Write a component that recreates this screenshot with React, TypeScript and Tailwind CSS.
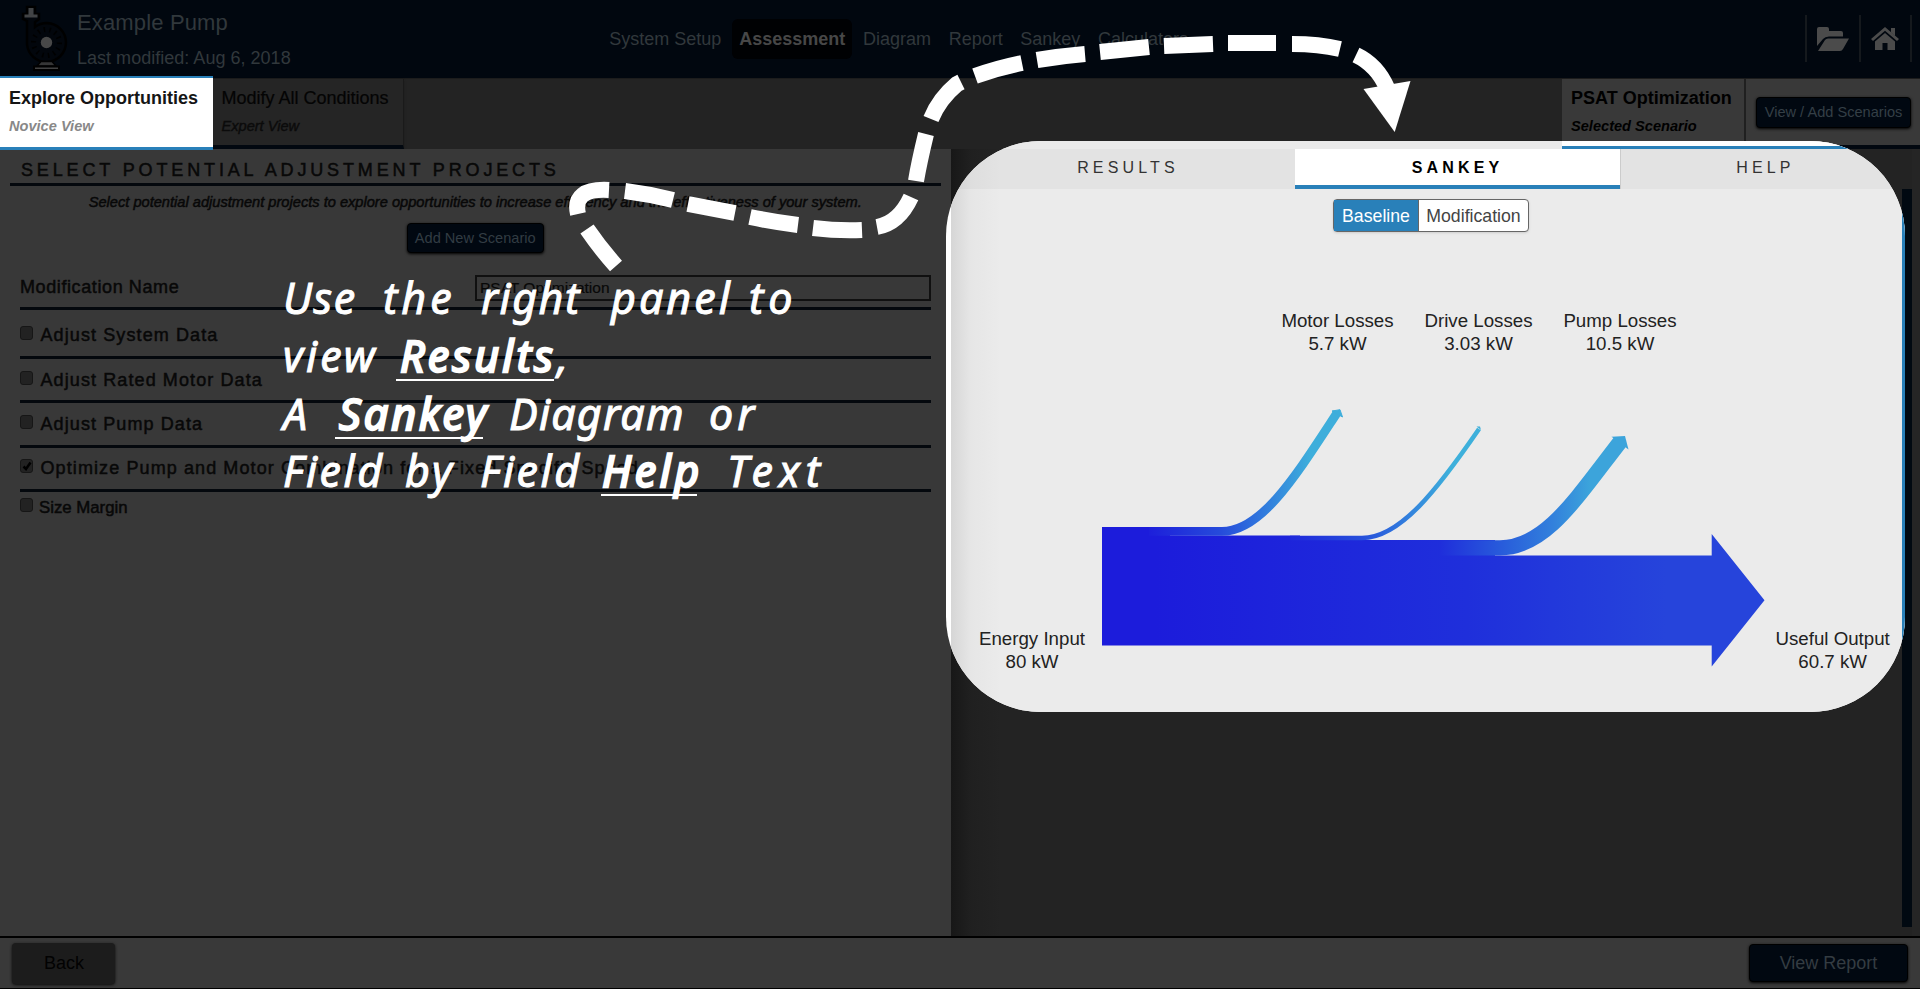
const NAV = ["System Setup", "Assessment", "Diagram", "Report", "Sankey", "Calculators"];

const PROJECTS = [
  { label: "Adjust System Data", checked: false, row: "h-[49px] pt-[16px]" },
  { label: "Adjust Rated Motor Data", checked: false, row: "h-[44px] pt-[12px]" },
  { label: "Adjust Pump Data", checked: false, row: "h-[45px] pt-[12px]" },
  { label: "Optimize Pump and Motor Combination for a Fixed Specific Speed", checked: true, row: "h-[44px] pt-[11px]" },
];

function PumpLogo() {
  return (
    <svg width="54" height="76" viewBox="0 0 54 76" className="ml-[18px] shrink-0">
      <path d="M5 19V14H9V7H17V14H21V19L17 22V27Q22 23 29 23A19.500 19.500 0 1 1 9 44V21Z" fill="#02060c" stroke="#000" strokeWidth="2.500" />
      <path d="M6.500 14.500H10.500V8H15.500V14.500H19.500V17.500H6.500Z" fill="#414345" />
      <circle cx="28.500" cy="42.500" r="13" fill="none" stroke="#000" strokeWidth="5" strokeDasharray="1.500 4.300" />
      <circle cx="28.500" cy="42.500" r="5.700" fill="#484848" />
      <path d="M23 61.500H34L38 66H19Z" fill="#363636" stroke="#000" strokeWidth="1.500" />
      <path d="M16 66.500H41V70H16Z" fill="#414141" stroke="#000" strokeWidth="2" />
    </svg>
  );
}

function Checkbox({ checked }: { checked: boolean }) {
  return (
    <span className="flex h-[14px] w-[13px] shrink-0 items-center justify-center rounded-[3px] border border-[#161616] bg-[#222]">
      {checked && (
        <svg width="10" height="10" viewBox="0 0 10 10">
          <path d="M1.500 5.500L4 8L8.500 1.500" fill="none" stroke="#000" strokeWidth="2.500" />
        </svg>
      )}
    </span>
  );
}

function Header() {
  return (
    <header className="flex h-[78px] shrink-0 text-[#31383c]">
      <div className="flex w-[602.500px]">
        <PumpLogo />
        <div className="ml-[5px] pt-[9px]">
          <div className="text-[22px] leading-[27px] tracking-[0.150px]">Example Pump</div>
          <div className="mt-[10px] text-[18px] leading-6 tracking-[0.020px]">Last modified: Aug 6, 2018</div>
        </div>
      </div>
      <nav className="mt-[19px] flex h-10 gap-1 text-[18px] leading-10">
        {NAV.map((n) => (
          <span
            key={n}
            className={n === "Assessment" ? "rounded-md bg-[#000103] px-[7px] font-bold text-[#474747]" : "px-[6.800px]"}
          >
            {n}
          </span>
        ))}
      </nav>
      <div className="ml-auto mr-[8px] mt-[15px] flex h-[47px] items-center border-r-2 border-[#15191d]">
        <div className="flex h-full w-[54px] items-center justify-center border-l-2 border-[#15191d]">
          <svg width="34" height="26" viewBox="0 0 34 26" fill="#4b4b4b">
            <path d="M1 20V3Q1 1 3 1H11Q13 1 13 3V5H25Q27 5 27 7V10.500H13Q9 10.500 7 13Z" />
            <path d="M2 25L9 14Q10 12.500 12 12.500H33L27 23Q26 25 24 25Z" />
          </svg>
        </div>
        <div className="flex h-full w-[51px] items-center justify-center border-l-2 border-[#15191d] pr-px">
          <svg width="30" height="26" viewBox="0 0 30 26" fill="#4b4b4b">
            <path d="M15 1L29 13L27 15L15 4.700L3 15L1 13Z" />
            <path d="M21 2H25V10L21 6.500Z" />
            <path d="M15 7L25 15.500V24H17.500V17H12.500V24H5V15.500Z" />
          </svg>
        </div>
      </div>
    </header>
  );
}

function ViewTabs() {
  return (
    <div className="flex h-[71px] shrink-0 border-t border-[#1c1c1c] bg-[#232323] text-black">
      <div className="z-10 -mt-[3px] h-[74px] w-[212.500px] border-b-[3px] border-t-2 border-[#2980b9] bg-white pl-[9px] pt-[6px]">
        <div className="text-[18px] font-bold leading-7 text-[#151515]">Explore Opportunities</div>
        <div className="text-[14.600px] font-bold italic leading-7 text-[#888]">Novice View</div>
      </div>
      <div className="h-[70px] w-[191px] border-b-4 border-r border-b-[#020810] border-r-[#1a1a1a] bg-[#252525] pl-[9px] pt-[5px] shadow">
        <div className="text-[18px] leading-7 text-[#040404] [-webkit-text-stroke:0.2px_#040404]">Modify All Conditions</div>
        <div className="text-[14.600px] italic leading-7 text-[#0b0b0b] [-webkit-text-stroke:0.4px_#0b0b0b]">Expert View</div>
      </div>
      <div className="ml-auto flex h-[70px] w-[358px] border-b-4 border-[#020810] bg-[#393939]">
        <div className="w-[184px] border-r-2 border-[#202020] pl-[9px] pt-[5px]">
          <div className="text-[18px] font-bold leading-7">PSAT Optimization</div>
          <div className="text-[14.600px] font-bold italic leading-7">Selected Scenario</div>
        </div>
        <div className="ml-[10px] mt-[18px] flex h-[31px] w-[155px] items-center justify-center rounded-sm border border-black bg-[#010811] text-[14.600px] text-[#343f46] shadow-[0_1px_3px_#000]">
          View / Add Scenarios
        </div>
      </div>
    </div>
  );
}

function ProjectsPanel() {
  return (
    <section className="h-full w-[950.500px] bg-[#383838] pt-1 text-[#080808] [-webkit-text-stroke:0.5px_#080808]">
      <h2 className="ml-[10px] h-[33px] w-[931px] border-b-[3px] border-[#04080d] pl-[11px] text-[18px] leading-[34px] tracking-[3.860px]">
        SELECT POTENTIAL ADJUSTMENT PROJECTS
      </h2>
      <p className="mt-1 whitespace-nowrap text-center text-[14.630px] italic leading-6">
        Select potential adjustment projects to explore opportunities to increase efficiency and the effectiveness of your
        system.
      </p>
      <div className="mx-auto mt-[9px] flex h-[30px] w-[137px] items-center justify-center rounded-sm border border-black bg-[#010811] pt-px text-[14.600px] text-[#323c43] shadow-[0_1px_3px_#000] [-webkit-text-stroke:0]">
        Add New Scenario
      </div>
      <div className="ml-5 mt-[21px] flex h-[36px] w-[911px] border-b-[3px] border-[#04080d]">
        <span className="w-[455px] text-[18px] leading-[27px] tracking-[0.600px]">Modification Name</span>
        <span className="mt-px h-[26px] w-[456px] border-2 border-[#101010] pl-[3px] text-[15.500px] leading-[22px] [-webkit-text-stroke:0.2px_#080808]">
          PSAT Optimization
        </span>
      </div>
      {PROJECTS.map((p) => (
        <div key={p.label} className={"ml-5 flex w-[911px] items-start border-b-[3px] border-[#04080d] " + p.row}>
          <Checkbox checked={p.checked} />
          <span className="-mt-[4px] ml-[7.500px] text-[18px] leading-[27px] tracking-[1.100px]">{p.label}</span>
        </div>
      ))}
      <div className="ml-5 flex items-start pt-[6px]">
        <Checkbox checked={false} />
        <span className="-mt-[4px] ml-[6px] text-[16.800px] leading-[27px]">Size Margin</span>
      </div>
    </section>
  );
}

function Sankey() {
  return (
    <svg width="700" height="280" viewBox="1080 400 700 280" className="ml-[129px] shrink-0">
      <defs>
        <linearGradient id="main" gradientUnits="userSpaceOnUse" x1="1102" x2="1765" y1="0" y2="0">
          <stop offset="0.080" stopColor="#1c1cdb" />
          <stop offset="0.550" stopColor="#1f2fdb" />
          <stop offset="0.850" stopColor="#2644db" />
        </linearGradient>
        <linearGradient id="motor" gradientUnits="userSpaceOnUse" x1="1149" x2="1310" y1="0" y2="0">
          <stop offset="0" stopColor="#1d1fdb" />
          <stop offset="0.450" stopColor="#264cdb" />
          <stop offset="0.700" stopColor="#3078dd" />
          <stop offset="1" stopColor="#3eaedb" />
        </linearGradient>
        <linearGradient id="drive" gradientUnits="userSpaceOnUse" x1="1290" x2="1450" y1="0" y2="0">
          <stop offset="0" stopColor="#1f29db" />
          <stop offset="0.450" stopColor="#264fdb" />
          <stop offset="0.700" stopColor="#3079dd" />
          <stop offset="1" stopColor="#3eb0db" />
        </linearGradient>
        <linearGradient id="pump" gradientUnits="userSpaceOnUse" x1="1440" x2="1590" y1="0" y2="0">
          <stop offset="0" stopColor="#1f2edb" />
          <stop offset="0.450" stopColor="#2960db" />
          <stop offset="0.750" stopColor="#3280dc" />
          <stop offset="1" stopColor="#3ca4db" />
        </linearGradient>
      </defs>
      <path
        d="M1102 527H1170V535.500H1300V540H1495V555.500H1711.700V534L1764.500 600.300L1711.700 666.500V645.500H1102Z"
        fill="url(#main)"
      />
      <path d="M1149 531.400H1222C1262 531.400 1297 474 1337 413" fill="none" stroke="url(#motor)" strokeWidth="8.800" />
      <path d="M1332 411L1340 409.700L1342.500 417Z" fill="#3eaedb" stroke="#3eaedb" />
      <path d="M1290 538H1362C1400 538 1437 490 1479 429" fill="none" stroke="url(#drive)" strokeWidth="4.600" />
      <path d="M1476.500 426.500H1480L1481 430Z" fill="#3eb0db" />
      <path d="M1440 547.800H1500C1545 547.800 1575 500 1620 442" fill="none" stroke="url(#pump)" strokeWidth="15.200" />
      <path d="M1611.500 436.700L1625 436L1628.500 449.500Z" fill="#3ca4db" />
    </svg>
  );
}

function Spotlight() {
  return (
    <div className="absolute left-[946px] top-[140.500px] flex h-[571.500px] w-[959px] flex-col overflow-hidden rounded-[95px] bg-white text-[#222]">
      <div className="flex h-[8.500px] shrink-0 bg-[#eaeaea]">
        <div className="ml-[616px] flex-1 border-b-[3px] border-[#2980b9] bg-white" />
      </div>
      <div className="ml-[5px] flex flex-1 flex-col bg-[linear-gradient(to_right,#d6d6d6_0,#e6e6e6_20px,#ebebeb_50px)]">
        <div className="flex h-10 shrink-0 bg-black/3 text-[16px] leading-[37px] tracking-[4.150px] text-[#333]">
          <div className="w-[344px] shrink-0 pl-[10px] text-center">RESULTS</div>
          <div className="w-[325px] shrink-0 border-b-4 border-[#2980b9] bg-white text-center font-bold text-black">
            SANKEY
          </div>
          <div className="w-[290px] shrink-0 border-l border-[#ccc] text-center">HELP</div>
        </div>
        <div className="flex flex-1">
          <div className="flex flex-1 flex-col">
            <div className="ml-[382px] mt-[10px] flex h-[33px] w-[196px] rounded-sm border border-[#666] bg-white text-[17.700px] leading-[32px] text-[#444] shadow">
              <span className="w-[85px] border-r border-[#666] bg-[#2980b9] text-center text-white">Baseline</span>
              <span className="flex-1 text-center">Modification</span>
            </div>
            <div className="mt-[77px] flex h-[91px] pl-[306.500px] text-center text-[18.700px] leading-[23.200px] text-[#222]">
              <div className="w-[160px]">Motor Losses<br />5.7 kW</div>
              <div className="-ml-[10px] w-[142px]">Drive Losses<br />3.03 kW</div>
              <div className="w-[141px]">Pump Losses<br />10.5 kW</div>
            </div>
            <div className="relative">
              <Sankey />
              <div className="absolute left-[28px] top-[227px] whitespace-nowrap text-center text-[18.700px] leading-[23.300px]">
                Energy Input<br />80 kW
              </div>
              <div className="absolute left-[824.500px] top-[227px] whitespace-nowrap text-center text-[18.700px] leading-[23.300px]">
                Useful Output<br />60.7 kW
              </div>
            </div>
          </div>
          <div className="w-[3px] bg-[#2980b9]" />
        </div>
      </div>
    </div>
  );
}

function GuideArrow() {
  return (
    <svg width="900" height="260" viewBox="540 20 900 260" className="absolute left-[540px] top-5">
      <path
        d="M616 266Q600 248 587 229M578 214Q572 188 609 190M625 191Q649 194 673 200M688 204L735 213M750 217Q774 222 798 225M813 228Q838 231 862 230M877 227Q899 223 911 197M916 181Q919 163 926 134M931 119Q939 99 957 84L961 82M975 76Q997 68 1022 63M1037 60Q1061 56 1085 54M1100 52L1149 47M1164 46L1213 44M1228 43H1276M1292 44Q1319 44 1340 49M1356 55Q1377 65 1387 88"
        fill="none"
        stroke="#fff"
        strokeWidth="16"
      />
      <path d="M1363.500 89L1410.500 81L1394.700 132Z" fill="#fff" />
    </svg>
  );
}

function GuideText() {
  return (
    <div className="absolute left-[283px] top-[269px] whitespace-nowrap font-['Noto_Sans'] text-[43px] italic leading-[58px] text-white [-webkit-text-stroke:1px_#fff]">
      <div className="flex">
        <span className="w-[100px] tracking-[1.500px]">Use</span>
        <span className="w-[98px] tracking-[4px]">the</span>
        <span className="w-[130px] tracking-[1.500px]">right</span>
        <span className="w-[138px] tracking-[3px]">panel</span>
        <span className="tracking-[5px]">to</span>
      </div>
      <div className="flex">
        <span className="w-[113px] tracking-[3px]">view</span>
        <span className="mt-[7px] h-[47px] w-[158px] border-b-2 border-white pl-1 leading-[44px] tracking-[3.200px] [-webkit-text-stroke:2.300px_#fff]">
          Results
        </span>
        <span className="pl-[3px]">,</span>
      </div>
      <div className="flex">
        <span className="w-[52px]">A</span>
        <span className="mt-[7px] h-[47px] w-[148px] border-b-2 border-white pl-1 leading-[44px] tracking-[3px] [-webkit-text-stroke:2.300px_#fff]">
          Sankey
        </span>
        <span className="ml-[26px] w-[200px] tracking-[1.200px]">Diagram</span>
        <span className="tracking-[4px]">or</span>
      </div>
      <div className="-mt-px flex">
        <span className="w-[122px] tracking-[2.500px]">Field</span>
        <span className="w-[75px] tracking-[3px]">by</span>
        <span className="w-[121px] tracking-[2.500px]">Field</span>
        <span className="mt-[7px] h-[47px] w-[96px] border-b-2 border-white pl-px leading-[44px] tracking-[3.500px] [-webkit-text-stroke:2.300px_#fff]">
          Help
        </span>
        <span className="ml-[30px] tracking-[6px]">Text</span>
      </div>
    </div>
  );
}

export default function App() {
  return (
    <div className="relative flex h-[989px] w-[1920px] flex-col overflow-hidden bg-[#01070f] font-['Liberation_Sans',Arial,sans-serif]">
      <Header />
      <ViewTabs />
      <main className="flex h-[787px] shrink-0">
        <ProjectsPanel />
        <section className="flex flex-1 justify-end bg-[linear-gradient(to_right,#171717_0,#202020_20px,#232323_50px)]">
          <div className="mt-10 h-[738px] w-[10px] bg-[#010911]" />
          <div className="w-2 bg-[#252525]" />
        </section>
      </main>
      <footer className="flex h-[53px] shrink-0 justify-between border-b border-t-2 border-black bg-[#393939] text-[18px]">
        <div className="ml-[12px] mt-[5px] flex h-[41px] w-[103px] items-center justify-center rounded-[4px] bg-[#1c1c1c] pl-px text-[#020202] shadow-[0_1px_3px_#0a0a0a]">
          Back
        </div>
        <div className="mr-[12px] mt-[6px] flex h-[38px] w-[159px] items-center justify-center rounded-sm border border-black bg-[#010811] text-[#343c42] shadow-[0_1px_3px_#000]">
          View Report
        </div>
      </footer>
      <Spotlight />
      <GuideArrow />
      <GuideText />
    </div>
  );
}
